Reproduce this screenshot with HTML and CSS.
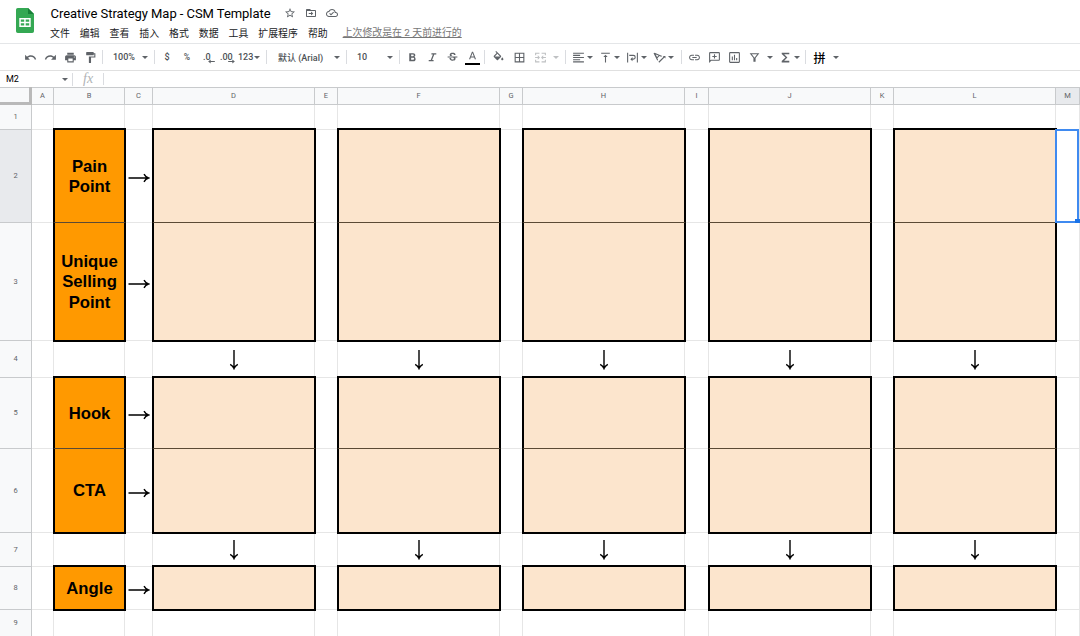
FILE: index.html
```html
<!DOCTYPE html>
<html lang="zh-CN">
<head>
  <meta charset="UTF-8">
  <title>Creative Strategy Map - CSM Template</title>
  <meta name="viewport" content="width=device-width, initial-scale=1">
  <link rel="stylesheet" href="styles.css">
</head>
<body>
  <header class="header">
    <svg class="logo" viewBox="0 0 18 25">
      <path fill="#34a853" d="M1.8 0H12l6 6v17.200a1.800 1.800 0 0 1-1.800 1.800H1.800A1.800 1.800 0 0 1 0 23.200V1.800A1.800 1.800 0 0 1 1.800 0z"/>
      <path fill="#188038" d="M12 0l6 6h-6z"/>
      <path fill="#fff" fill-rule="evenodd" d="M3.300 10h11.400v9H3.300zM4.800 11.500v2.200h3.400v-2.200zM9.700 11.500v2.200h3.500v-2.200zM4.800 15.200v2.300h3.400v-2.300zM9.700 15.200v2.300h3.500v-2.300z"/>
    </svg>
    <div class="header-main">
      <div class="title-row">
        <h1 class="title">Creative Strategy Map - CSM Template</h1>
        <svg class="title-icon" viewBox="0 0 24 24"><path d="M22 9.240l-7.190-.62L12 2 9.190 8.630 2 9.240l5.460 4.730L5.820 21 12 17.270 18.180 21l-1.630-7.030L22 9.240zM12 15.400l-3.760 2.270 1-4.280-3.320-2.880 4.380-.38L12 6.100l1.710 4.040 4.380.38-3.320 2.880 1 4.280L12 15.400z"/></svg>
        <svg class="title-icon" viewBox="0 0 24 24"><path d="M20 6h-8l-2-2H4c-1.100 0-2 .9-2 2v12c0 1.100.9 2 2 2h16c1.100 0 2-.9 2-2V8c0-1.100-.9-2-2-2zm0 12H4V8h16v10zM7.500 12H12V9l4.500 4-4.500 4v-3H7.500z"/></svg>
        <svg class="title-icon" viewBox="0 0 24 24"><path d="M19.350 10.040C18.670 6.590 15.640 4 12 4 9.110 4 6.610 5.640 5.360 8.040 2.350 8.360 0 10.900 0 14c0 3.310 2.690 6 6 6h13c2.760 0 5-2.240 5-5 0-2.640-2.050-4.780-4.650-4.960zM19 18H6c-2.210 0-4-1.790-4-4s1.790-4 4-4h.71C7.370 7.690 9.480 6 12 6c3.040 0 5.500 2.460 5.500 5.500v.5H19c1.660 0 3 1.340 3 3s-1.340 3-3 3zm-9-3.820l-2.090-2.090L6.500 13.500 10 17l6.010-6.010-1.410-1.410z"/></svg>
      </div>
      <nav class="menu">
        <span>文件</span>
        <span>编辑</span>
        <span>查看</span>
        <span>插入</span>
        <span>格式</span>
        <span>数据</span>
        <span>工具</span>
        <span>扩展程序</span>
        <span>帮助</span>
        <a class="last-edit">上次修改是在 2 天前进行的</a>
      </nav>
    </div>
  </header>

  <div class="toolbar">
    <div class="group">
      <span class="btn"><svg viewBox="0 0 24 24"><path d="M12.500 8c-2.650 0-5.050.99-6.900 2.600L2 7v9h9l-3.620-3.620c1.390-1.160 3.160-1.880 5.120-1.880 3.540 0 6.550 2.310 7.600 5.500l2.370-.78C21.080 11.030 17.150 8 12.500 8z"/></svg></span>
      <span class="btn"><svg viewBox="0 0 24 24"><path d="M18.400 10.600C16.550 8.990 14.150 8 11.500 8c-4.650 0-8.580 3.030-9.960 7.220L3.900 16c1.050-3.190 4.050-5.500 7.600-5.500 1.950 0 3.730.72 5.120 1.880L13 16h9V7l-3.600 3.600z"/></svg></span>
      <span class="btn"><svg viewBox="0 0 24 24"><path d="M19 8H5c-1.660 0-3 1.340-3 3v6h4v4h12v-4h4v-6c0-1.660-1.340-3-3-3zm-3 11H8v-5h8v5zm3-7c-.55 0-1-.45-1-1s.45-1 1-1 1 .45 1 1-.45 1-1 1zm-1-9H6v4h12V3z"/></svg></span>
      <span class="btn"><svg viewBox="0 0 24 24"><path d="M18 4V3c0-.55-.45-1-1-1H5c-.55 0-1 .45-1 1v4c0 .55.45 1 1 1h12c.55 0 1-.45 1-1V6h1v4H9v11c0 .55.45 1 1 1h2c.55 0 1-.45 1-1v-9h8V4h-3z"/></svg></span>
    </div>
    <i class="sep"></i>
    <div class="select zoom-select"><span>100%</span><i class="caret"></i></div>
    <i class="sep"></i>
    <div class="group">
      <span class="btn">$</span>
      <span class="btn pct">%</span>
      <span class="btn decimal">.0<svg viewBox="0 0 8 6"><path d="M0 3l3-2.500V2.400h5v1.200H3v1.900z"/></svg></span>
      <span class="btn decimal">.00<svg viewBox="0 0 8 6"><path d="M8 3L5 .5v1.900H0v1.200h5v1.900z"/></svg></span>
      <div class="select format-select"><span>123</span><i class="caret"></i></div>
    </div>
    <i class="sep"></i>
    <div class="select font-select"><span>默认 (Arial)</span><i class="caret"></i></div>
    <i class="sep"></i>
    <div class="select size-select"><span>10</span><i class="caret"></i></div>
    <i class="sep"></i>
    <div class="group text-group">
      <span class="btn"><svg viewBox="0 0 24 24"><path d="M15.600 10.790c.97-.67 1.650-1.770 1.650-2.790 0-2.260-1.750-4-4-4H6v15h8.040c2.090 0 3.710-1.700 3.710-3.790 0-1.520-.86-3.820-2.150-4.420zM9.500 6.500h3.500c.83 0 1.500.67 1.500 1.500s-.67 1.500-1.500 1.500H9.500zm4 9.500h-4v-3.500h4c.83 0 1.500.9 1.500 1.750S14.330 16 13.500 16z"/></svg></span>
      <span class="btn"><svg viewBox="0 0 24 24"><path d="M10 4v2.500h2.710l-4 10H5V19h9v-2.500h-2.710l4-10H19V4z"/></svg></span>
      <span class="btn"><svg viewBox="0 0 24 24"><path d="M7.240 8.750c-.26-.48-.39-1.030-.39-1.670 0-.61.13-1.160.4-1.670.26-.5.63-.93 1.110-1.290.48-.35 1.050-.63 1.700-.83.66-.19 1.390-.29 2.180-.29.81 0 1.540.11 2.210.34.66.22 1.230.54 1.690.94.47.4.83.88 1.080 1.430.25.55.38 1.150.38 1.810h-3.010c0-.31-.05-.59-.15-.85-.09-.27-.24-.49-.44-.68-.2-.19-.45-.33-.75-.44-.3-.1-.66-.16-1.060-.16-.39 0-.74.04-1.030.13-.29.09-.53.21-.72.36-.19.16-.34.34-.44.55-.1.21-.15.43-.15.66 0 .48.25.88.74 1.210.38.25.77.48 1.410.7H7.390zM21 12v-2H3v2h9.620c.18.07.4.14.55.2.37.17.66.34.87.51.21.17.35.36.43.57.07.2.11.43.11.69 0 .23-.05.45-.14.66-.09.2-.23.38-.42.53-.19.15-.42.26-.71.35-.29.08-.63.13-1.010.13-.43 0-.83-.04-1.180-.13s-.66-.23-.91-.42c-.25-.19-.45-.44-.59-.75-.14-.31-.25-.76-.25-1.210H6.400c0 .55.08 1.130.24 1.580.16.45.37.85.65 1.210.28.35.6.66.98.92.37.26.78.48 1.220.65.44.17.9.3 1.380.39.48.08.96.13 1.440.13.8 0 1.530-.09 2.180-.28s1.210-.45 1.670-.79c.46-.34.82-.77 1.070-1.270s.38-1.070.38-1.710c0-.6-.1-1.140-.31-1.610l-.17-.33H21z"/></svg></span>
      <span class="btn text-color"><svg viewBox="0 0 24 24"><path d="M11 3L5.500 17h2.250l1.120-3h6.250l1.120 3h2.250L13 3h-2zm-1.380 9L12 5.670 14.380 12H9.620z"/></svg></span>
    </div>
    <i class="sep"></i>
    <div class="group cell-group">
      <span class="btn"><svg viewBox="0 0 24 24"><path d="M16.560 8.940L7.620 0 6.210 1.410l2.380 2.380-5.150 5.150c-.59.59-.59 1.540 0 2.120l5.500 5.500c.29.29.68.44 1.060.44s.77-.15 1.060-.44l5.500-5.500c.59-.58.59-1.530 0-2.120zM5.210 10L10 5.210 14.790 10H5.210zM19 11.500s-2 2.170-2 3.500c0 1.100.9 2 2 2s2-.9 2-2c0-1.330-2-3.500-2-3.500z"/></svg></span>
      <span class="btn"><svg viewBox="0 0 24 24"><path d="M3 3v18h18V3H3zm8 16H5v-6h6v6zm0-8H5V5h6v6zm8 8h-6v-6h6v6zm0-8h-6V5h6v6z"/></svg></span>
      <span class="btn disabled"><svg viewBox="0 0 24 24"><path d="M2 3h8v2H4v3H2zM14 3h8v5h-2V5h-6zM2 16h2v3h6v2H2zM20 16h2v5h-8v-2h6zM2 11h5V8l4 4-4 4v-3H2zM22 11h-5V8l-4 4 4 4v-3h5z"/></svg></span>
      <i class="caret disabled"></i>
    </div>
    <i class="sep"></i>
    <div class="group align-group">
      <div class="split"><svg viewBox="0 0 24 24"><path d="M15 15H2v2h13v-2zm0-8H2v2h13V7zM2 13h20v-2H2v2zm0 8h20v-2H2v2zM2 3v2h20V3H2z"/></svg><i class="caret"></i></div>
      <div class="split"><svg viewBox="0 0 24 24"><path d="M8 11h3v10h2V11h3l-4-4-4 4zM4 3v2h16V3H4z"/></svg><i class="caret"></i></div>
      <div class="split"><svg viewBox="0 0 24 24"><path d="M2 3h2v18H2zM20 3h2v18h-2zM6 7h7.500a4.500 4.500 0 0 1 0 9H12v3l-4-4 4-4v3h1.500a2.500 2.500 0 0 0 0-5H6z"/></svg><i class="caret"></i></div>
      <div class="split"><svg viewBox="0 0 24 24"><path d="M1 4l2-1 14 6-2 1.500-3-1.300-4 4 1.300 3L8 18zM5 6.300l2.500 5L10.300 8.500zM10 20l9.500-9.500L18 9h5v5l-1.800-1.800L11.500 21.500z"/></svg><i class="caret"></i></div>
    </div>
    <i class="sep"></i>
    <div class="group insert-group">
      <span class="btn"><svg viewBox="0 0 24 24"><path d="M3.900 12c0-1.710 1.390-3.100 3.100-3.100h4V7H7c-2.760 0-5 2.240-5 5s2.240 5 5 5h4v-1.900H7c-1.710 0-3.100-1.390-3.100-3.100zM8 13h8v-2H8v2zm9-6h-4v1.900h4c1.710 0 3.100 1.390 3.100 3.100s-1.390 3.100-3.100 3.100h-4V17h4c2.760 0 5-2.240 5-5s-2.240-5-5-5z"/></svg></span>
      <span class="btn"><svg viewBox="0 0 24 24"><path d="M4 2h16a2 2 0 0 1 2 2v12a2 2 0 0 1-2 2H6l-4 4V4a2 2 0 0 1 2-2zm0 2v13l1.200-1H20V4zM11 6h2v3h3v2h-3v3h-2v-3H8V9h3z"/></svg></span>
      <span class="btn"><svg viewBox="0 0 24 24"><path d="M4 2h16a2 2 0 0 1 2 2v16a2 2 0 0 1-2 2H4a2 2 0 0 1-2-2V4a2 2 0 0 1 2-2zm0 2v16h16V4zM7 10h2v7H7zM11 7h2v10h-2zM15 13h2v4h-2z"/></svg></span>
      <span class="btn"><svg viewBox="0 0 24 24"><path d="M3 4h18l-7 9v7h-4v-7zM7 6l5 6.500L17 6z"/></svg></span>
      <i class="caret"></i>
      <div class="split"><svg viewBox="0 0 24 24"><path d="M19 3H5v2.500l7 6.500-7 6.500V21h14v-3H9.500l6-6-6-6H19z"/></svg><i class="caret"></i></div>
    </div>
    <i class="sep"></i>
    <div class="group input-tools"><span class="btn">拼</span><i class="caret"></i></div>
  </div>

  <div class="formula-bar">
    <div class="name-box"><span>M2</span><i class="caret"></i></div>
    <span class="fx">fx</span>
  </div>

  <main class="sheet" id="sheet"></main>

  <script>
    const sheet = document.getElementById("sheet");
    const columns = "ABCDEFGHIJKLM";
    const rowCount = 9;
    const selected = { col: "M", row: 2 };

    // labels in column B, one entry per block of rows
    const blocks = [
      { start: 2, labels: ["Pain Point", "Unique Selling Point"] },
      { start: 5, labels: ["Hook", "CTA"] },
      { start: 8, labels: ["Angle"] }
    ];
    const ideaColumns = ["D", "F", "H", "J", "L"];

    const rightArrow = '<svg class="arrow-right" viewBox="0 0 22 10"><path d="M0.500 5h19.500M16 1.200q1.500 2.800 4.500 3.800q-3 1-4.500 3.800"/></svg>';
    const downArrow = '<svg class="arrow-down" viewBox="0 0 10 20"><path d="M5 0v18M1.200 14.300q2.800 1.500 3.800 4.200q1-2.700 3.800-4.200"/></svg>';

    function add(className, col, row, html) {
      const el = document.createElement("div");
      el.className = className;
      el.style.gridColumn = col;
      el.style.gridRow = row;
      el.innerHTML = html;
      sheet.appendChild(el);
    }

    // grid line 1 is the header column / row
    const colLine = letter => columns.indexOf(letter) + 2;

    add("corner", 1, 1, "");
    for (const letter of columns) {
      add("col-head" + (letter === selected.col ? " active" : ""), colLine(letter), 1, letter);
    }
    for (let r = 1; r <= rowCount; r++) {
      add("row-head" + (r === selected.row ? " active" : ""), 1, r + 1, r);
      for (const letter of columns) {
        add("cell", colLine(letter), r + 1, "");
      }
    }

    for (const block of blocks) {
      block.labels.forEach((label, i) => {
        const row = block.start + i + 1;
        const edges = (i === 0 ? " first" : "") + (i === block.labels.length - 1 ? " last" : "");
        add("box label" + edges, colLine("B"), row, "<span>" + label + "</span>");
        add("arrow", colLine("C"), row, rightArrow);
        for (const letter of ideaColumns) {
          add("box idea" + edges, colLine(letter), row, "");
        }
      });
    }
    for (const row of [4, 7]) {
      for (const letter of ideaColumns) {
        add("arrow down", colLine(letter), row + 1, downArrow);
      }
    }
    add("selection", colLine(selected.col), selected.row + 1, "");
  </script>
</body>
</html>
```

FILE: styles.css
```css
* {
  box-sizing: border-box;
}

body {
  margin: 0;
  width: 1080px;
  height: 636px;
  overflow: hidden;
  background: #fff;
  color: #202124;
  font-family: Roboto, "Noto Sans CJK SC", sans-serif;
}

/* header */
.header {
  display: flex;
  height: 44px;
  padding-left: 16px;
  border-bottom: 1px solid #e4e6e8;
}

.logo {
  width: 18px;
  height: 25px;
  margin-top: 8px;
}

.header-main {
  margin-left: 16px;
}

.title-row {
  display: flex;
  align-items: center;
  height: 26px;
}

.title {
  width: 225.5px;
  margin: 0 0 0 0.5px;
  font-size: 13px;
  font-weight: 400;
  letter-spacing: -0.05px;
  white-space: nowrap;
  color: #000;
}

.title-icon {
  width: 12px;
  height: 12px;
  margin: 0 1px 0 8px;
  fill: #5f6368;
}

.menu {
  display: flex;
  gap: 10px;
  height: 14px;
  margin-top: 1px;
  line-height: 14px;
  font-size: 9.9px;
}

.last-edit {
  margin: -1px 0 0 5px;
  color: #777;
  text-decoration: underline;
}

/* toolbar */
.toolbar {
  display: flex;
  align-items: center;
  height: 27px;
  padding-left: 20px;
  border-bottom: 1px solid #e0e0e0;
  font-size: 9px;
  font-weight: 500;
  color: #4d5156;
}

.group {
  display: flex;
  align-items: center;
}

.btn {
  display: flex;
  flex: none;
  align-items: center;
  justify-content: center;
  width: 20px;
  height: 20px;
}

.btn svg {
  width: 13px;
  height: 13px;
}

.toolbar svg {
  fill: #5f6368;
}

.toolbar svg path {
  fill-rule: evenodd;
}

.sep {
  flex: none;
  width: 1px;
  height: 14px;
  margin: 0 2px;
  background: #dadce0;
}

.caret {
  flex: none;
  border: 3px solid transparent;
  border-top-color: #5f6368;
  border-bottom: 0;
}

.select {
  display: flex;
  flex: none;
  align-items: center;
  justify-content: space-between;
  padding-right: 4px;
  white-space: nowrap;
}

.zoom-select {
  width: 47px;
  padding-left: 8px;
}

.pct {
  font-size: 8.5px;
}

.btn.decimal {
  flex-direction: column;
  width: 19.5px;
}

.btn.decimal svg {
  width: 7px;
  height: 5px;
  margin: -3px 0 -2px 10px;
}

.format-select {
  width: 28px;
  padding-left: 2px;
}

.font-select {
  width: 75px;
  padding-left: 9px;
}

.size-select {
  width: 48px;
  padding-left: 8px;
}

.text-color {
  flex-direction: column;
}

.text-color::after {
  content: "";
  width: 15px;
  height: 2px;
  background: #000;
}

.cell-group {
  gap: 1px;
  margin: 0 4px 0 1px;
}

.cell-group .caret {
  margin-left: 2px;
}

.disabled {
  opacity: 0.4;
}

.split {
  display: flex;
  align-items: center;
  width: 27.3px;
  padding-left: 3.5px;
}

.split svg {
  width: 13px;
  height: 13px;
  margin-right: 2px;
}

.align-group {
  margin-right: 2px;
}

.insert-group .btn + .caret {
  margin: 0 2.5px 0 3px;
}

.input-tools {
  gap: 2px;
}

.input-tools .btn {
  width: 23px;
  font-size: 12px;
  font-weight: 500;
  color: #000;
}

/* formula bar */
.formula-bar {
  display: flex;
  align-items: center;
  height: 16px;
  font-size: 9px;
  color: #000;
}

.name-box {
  display: flex;
  align-items: center;
  justify-content: space-between;
  width: 73px;
  height: 13px;
  padding: 0 4px 0 6px;
  border-right: 1px solid #dadce0;
}

.fx {
  width: 31px;
  padding-left: 10px;
  border-right: 1px solid #dadce0;
  font: italic 14px/12px "Liberation Serif", serif;
  color: #b0b3b6;
}

/* sheet */
.sheet {
  display: grid;
  grid-template-columns: 32px 22px 71px 28px 162px 23px 162px 23px 162px 24px 162px 23px 162px 24px;
  grid-template-rows: 18px 25px 93px 118px 37px 71px 84px 34px 43px 27px;
}

.corner,
.col-head,
.row-head {
  background: #f8f9fa;
  border: 0 solid #c8cacc;
  font-size: 7.5px;
  color: #5f6368;
}

.corner {
  border: solid #b9b9b9;
  border-width: 0 3px 3px 0;
  box-shadow: inset 0 1px #c8cacc;
}

.col-head {
  border-width: 1px 1px 1px 0;
  line-height: 16px;
  text-align: center;
}

.row-head {
  display: flex;
  align-items: center;
  justify-content: center;
  padding-bottom: 1px;
  border-width: 0 1px 1px 0;
}

.col-head.active,
.row-head.active {
  background: #e8eaed;
}

.cell {
  border: solid #e6e6e6;
  border-width: 0 1px 1px 0;
}

.box {
  margin: 0 -1px;
  border: 0 solid #000;
  border-width: 0 2px;
  border-bottom: 1px solid #5b4a35;
}

.box.first {
  margin-top: -2px;
  border-top: 2px solid #000;
}

.box.last {
  margin-bottom: -1px;
  border-bottom: 2px solid #000;
}

.idea {
  background: #fce5cd;
}

.label {
  display: flex;
  align-items: center;
  justify-content: center;
  padding-top: 2px;
  background: #ff9900;
  font: bold 16.7px/20.3px "Liberation Sans", Arial, sans-serif;
  text-align: center;
  color: #000;
}

.arrow {
  display: flex;
  align-items: center;
  justify-content: center;
  padding: 3px 1px 0 0;
}

.arrow.down {
  padding-top: 0;
}

.arrow svg {
  fill: none;
  stroke: #000;
  stroke-width: 1.4;
}

.arrow-right {
  width: 22px;
  height: 10px;
}

.arrow-down {
  width: 10px;
  height: 20px;
}

.selection {
  position: relative;
  margin: -1px 1px 0 -1px;
  border: 2px solid #3f8af0;
}

.selection::after {
  content: "";
  position: absolute;
  right: -3px;
  bottom: -2px;
  width: 5px;
  height: 4px;
  background: #1a73e8;
}
```
